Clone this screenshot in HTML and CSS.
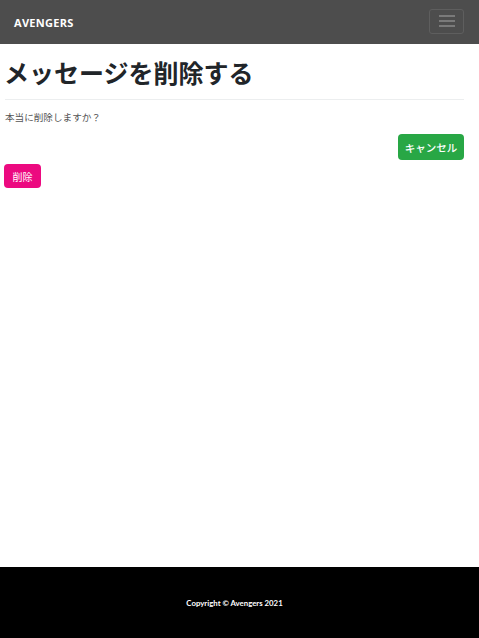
FILE: index.html
```html
<!DOCTYPE html>
<html lang="ja">
<head>
<meta charset="utf-8">
<title>メッセージを削除する</title>
<link rel="stylesheet" href="styles.css">
</head>
<body>
<div class="page">
  <nav class="navbar">
    <a class="brand" href="#">AVENGERS</a>
    <button class="toggler" type="button" aria-label="menu">
      <svg width="16" height="12" viewBox="0 0 16 12"><g stroke="#9a9a9a" stroke-width="1.2"><line x1="0" y1="1" x2="16" y2="1"/><line x1="0" y1="6" x2="16" y2="6"/><line x1="0" y1="11" x2="16" y2="11"/></g></svg>
    </button>
  </nav>
  <main class="content">
    <h1 class="title">メッセージを削除する</h1>
    <hr class="rule">
    <p class="question">本当に削除しますか？</p>
    <div class="actions">
      <a class="btn btn-cancel" href="#">キャンセル</a>
    </div>
    <div class="delete-row">
      <button class="btn btn-delete" type="button">削除</button>
    </div>
  </main>
  <footer class="footer">
    <p class="copy">Copyright © Avengers 2021</p>
  </footer>
</div>
</body>
</html>
```
FILE: styles.css
```css
* { box-sizing: border-box; }
html, body { margin: 0; padding: 0; }
body {
  font-family: Lato, "Noto Sans CJK JP", sans-serif;
  color: #212529;
  background: #fff;
}
.page {
  min-height: 638px;
  display: flex;
  flex-direction: column;
}
.navbar {
  height: 44px;
  background: #4d4d4d;
  display: flex;
  align-items: center;
  justify-content: space-between;
  padding: 0 15px 0 14px;
}
.brand {
  color: #fff;
  text-decoration: none;
  font-weight: 700;
  font-size: 11px;
  letter-spacing: 0.3px;
  font-family: "Open Sans", "Noto Sans CJK JP", sans-serif;
}
.toggler {
  width: 35px;
  height: 25px;
  border: 1px solid #5e5e5e;
  border-radius: 3px;
  background: transparent;
  display: flex;
  align-items: center;
  justify-content: center;
  padding: 0;
  margin-top: -2px;
}
.content {
  flex: 1;
  padding: 0 15px 0 5px;
}
.title {
  margin: 13px 0 0 -1px;
  font-family: "Noto Sans CJK JP", sans-serif;
  font-size: 25px;
  font-weight: 700;
  line-height: 30px;
  color: #212529;
}
.rule {
  margin: 12px 0 0 0;
  border: 0;
  border-top: 1px solid #eceeef;
}
.question {
  margin: 10px 0 0 0;
  font-family: "Noto Sans CJK JP", sans-serif;
  font-size: 9.6px;
  line-height: 14px;
  color: #555;
}
.actions {
  display: flex;
  justify-content: flex-end;
  margin-top: 10px;
}
.btn {
  display: inline-flex;
  align-items: center;
  justify-content: center;
  font-family: "Noto Sans CJK JP", sans-serif;
  color: #fff;
  text-decoration: none;
  border: 0;
  border-radius: 4px;
  font-size: 10.5px;
}
.btn-cancel {
  background: #28a745;
  width: 66px;
  height: 26px;
  font-weight: 500;
}
.delete-row {
  margin-top: 4px;
}
.btn-delete {
  background: #ec0a80;
  width: 37px;
  height: 24px;
  font-size: 10px;
  margin-left: -1px;
}
.footer {
  height: 71px;
  background: #000;
  display: flex;
  align-items: center;
  justify-content: center;
  padding-right: 10px;
}
.copy {
  margin: 0;
  color: #fff;
  font-family: Lato, sans-serif;
  font-size: 7.8px;
  font-weight: 700;
}
```
